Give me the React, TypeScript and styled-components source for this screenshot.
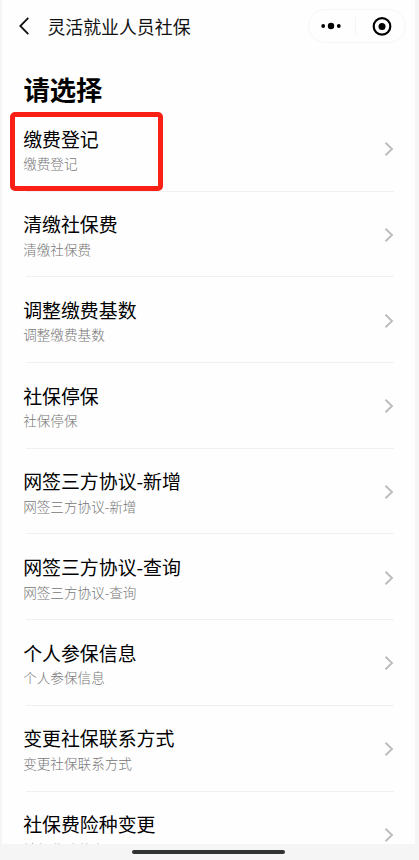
import React from "react";
import styled, { createGlobalStyle } from "styled-components";

const GlobalStyle = createGlobalStyle`
  * { box-sizing: border-box; }
  body {
    margin: 0;
    background: #f5f5f5;
    font-family: "Noto Sans CJK SC", sans-serif;
    overflow: hidden;
  }
`;

const Screen = styled.div`
  height: 860px;
  width: 419px;
  display: flex;
  flex-direction: column;
  overflow: hidden;
`;

const Sheet = styled.main`
  height: 844px;
  margin: 0 4px 0 2px;
  background: #fefefe;
  overflow: hidden;
`;

const NavBar = styled.header`
  height: 52px;
  display: flex;
  align-items: center;
  padding: 0 9px 0 16px;
`;

const BackIcon = styled.svg`
  width: 12px;
  height: 20px;
  margin-right: 17.4px;
`;

const NavTitle = styled.h1`
  flex: 1;
  margin: 0;
  font-size: 17.9px;
  line-height: 26px;
  font-weight: 400;
  color: #111;
  white-space: nowrap;
`;

const Capsule = styled.div`
  width: 98px;
  height: 34px;
  display: flex;
  align-items: center;
  border: 1px solid #f6f6f6;
  border-radius: 17px;
`;

const CapsuleButton = styled.button<{ $width: number; $before?: number; $after?: number }>`
  flex: none;
  width: ${(p) => p.$width}px;
  height: 24px;
  padding: 0 ${(p) => p.$after ?? 0}px 0 ${(p) => p.$before ?? 0}px;
  border: 0;
  background: none;
  display: flex;
  align-items: center;
  justify-content: center;
`;

const CapsuleDivider = styled.span`
  width: 1px;
  height: 19px;
  background: #f4f4f4;
`;

const Heading = styled.h2`
  margin: 0;
  height: 54px;
  padding: 18px 0 0 21.5px;
  font-size: 26.3px;
  line-height: 38px;
  font-weight: 700;
  color: #000;
`;

const List = styled.ul`
  list-style: none;
  margin: 0;
  padding: 0;
`;

const Row = styled.li`
  position: relative;
  height: 85.7px;
  margin-right: 21px;
  padding-left: 21.2px;
  display: flex;
  justify-content: space-between;
`;

const Rule = styled.span`
  position: absolute;
  left: 24px;
  right: 0;
  bottom: 0;
  height: 1px;
  background: #f0f0f0;
`;

const Labels = styled.div`
  padding-top: 18.6px;
`;

const Title = styled.div`
  font-size: 18.9px;
  line-height: 27px;
  color: #000;
  white-space: nowrap;
`;

const Subtitle = styled.div`
  font-size: 13.6px;
  line-height: 20px;
  margin-top: 1.5px;
  font-weight: 300;
  color: #777;
  white-space: nowrap;
`;

const Chevron = styled.svg`
  width: 10px;
  height: 14px;
  margin-top: 36.2px;
`;

const Highlight = styled.div`
  position: absolute;
  left: 8px;
  top: 6px;
  width: 153px;
  height: 79px;
  border: 5px solid #fb2015;
  border-radius: 5px;
`;

const HomeArea = styled.footer`
  height: 16px;
  display: flex;
  justify-content: center;
  padding-top: 6px;
`;

const HomeIndicator = styled.span`
  width: 153px;
  height: 4px;
  margin-right: 2px;
  border-radius: 2px;
  background: #303331;
`;

const services = [
  "缴费登记",
  "清缴社保费",
  "调整缴费基数",
  "社保停保",
  "网签三方协议-新增",
  "网签三方协议-查询",
  "个人参保信息",
  "变更社保联系方式",
  "社保费险种变更",
];

function ServiceRow({ label, highlighted }: { label: string; highlighted: boolean }) {
  return (
    <Row>
      <Labels>
        <Title>{label}</Title>
        <Subtitle>{label}</Subtitle>
      </Labels>
      <Chevron viewBox="0 0 10 14" fill="none" stroke="#bcbcbc" strokeWidth="1.9">
        <path d="M1.5 0.8 L8 7 L1.5 13.2" />
      </Chevron>
      <Rule />
      {highlighted && <Highlight />}
    </Row>
  );
}

export default function App() {
  return (
    <Screen>
      <GlobalStyle />
      <Sheet>
        <NavBar>
          <BackIcon viewBox="0 0 12 20" fill="none" stroke="#111" strokeWidth="1.8">
            <path d="M10.3 1.8 L2.3 10 L10.3 18.2" />
          </BackIcon>
          <NavTitle>灵活就业人员社保</NavTitle>
          <Capsule>
            <CapsuleButton $width={46} $after={2} aria-label="更多">
              <svg width="20" height="8" viewBox="0 0 20 8" fill="#000">
                <circle cx="2.2" cy="4" r="1.9" />
                <circle cx="10" cy="4" r="3.2" />
                <circle cx="17.8" cy="4" r="1.9" />
              </svg>
            </CapsuleButton>
            <CapsuleDivider />
            <CapsuleButton $width={49} $before={2.4} aria-label="关闭">
              <svg width="20" height="20" viewBox="0 0 20 20">
                <circle cx="10" cy="10.4" r="8.3" fill="none" stroke="#000" strokeWidth="2.2" />
                <circle cx="10" cy="10.4" r="3.5" fill="#000" />
              </svg>
            </CapsuleButton>
          </Capsule>
        </NavBar>
        <Heading>请选择</Heading>
        <List>
          {services.map((label, i) => (
            <ServiceRow key={label} label={label} highlighted={i === 0} />
          ))}
        </List>
      </Sheet>
      <HomeArea>
        <HomeIndicator />
      </HomeArea>
    </Screen>
  );
}
